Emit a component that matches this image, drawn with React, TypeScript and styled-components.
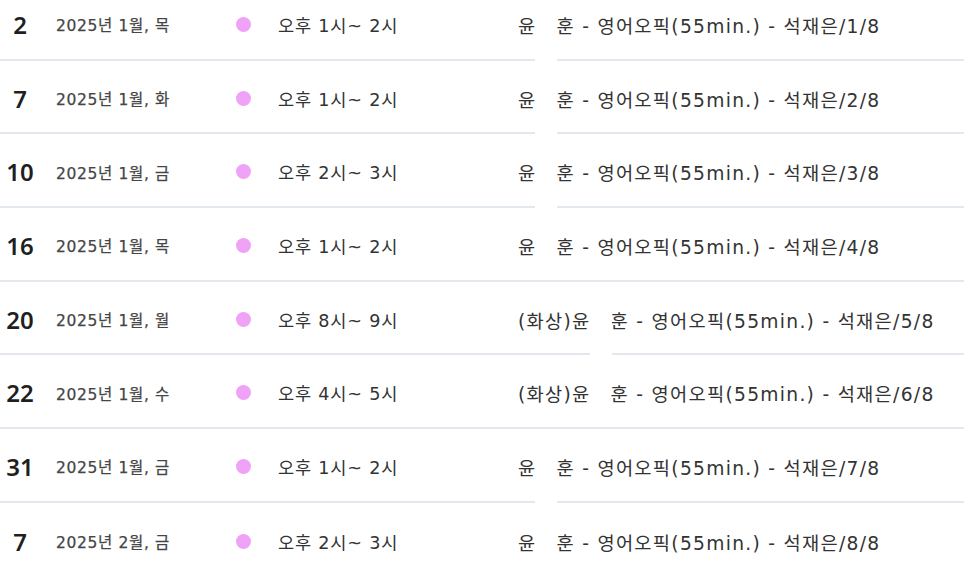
import React from "react";
import styled, { createGlobalStyle } from "styled-components";

const Global = createGlobalStyle`
  html, body { margin: 0; padding: 0; background: #ffffff; }
  body { font-family: "DejaVu Sans", "Noto Sans CJK KR", sans-serif; overflow: hidden; }
`;

const List = styled.div`
  margin-top: -13px;
  width: 964px;
`;

const Row = styled.div`
  box-sizing: border-box;
  height: 73.7px;
  padding-top: 3px;
  display: grid;
  grid-template-columns: 56px 180px 42px 240px 1fr;
  align-items: center;
  border-bottom: 2px solid #e3e7ee;
  &:last-child { border-bottom: none; }
`;

const Day = styled.div`
  width: 40px;
  text-align: center;
  font-family: "Noto Sans", "Noto Sans CJK KR", sans-serif;
  font-size: 24px;
  font-weight: 600;
  color: #1f1f1f;
`;

const DateText = styled.div`
  font-size: 15.5px;
  letter-spacing: 0.65px;
  color: #454545;
  -webkit-text-stroke: 0.25px #454545;
`;

const Dot = styled.span`
  display: block;
  width: 15px;
  height: 15px;
  border-radius: 50%;
  background: #f0a2f6;
`;

const Time = styled.div`
  font-size: 17.6px;
  letter-spacing: 0.8px;
  color: #333333;
`;

const Title = styled.div`
  font-size: 18.7px;
  letter-spacing: 1.28px;
  color: #333333;
  white-space: nowrap;
`;

const Blank = styled.span<{ $covers: boolean }>`
  display: inline-block;
  position: relative;
  width: 20px;
  height: 1em;
  vertical-align: middle;
  &::after {
    content: "";
    position: absolute;
    left: -1px;
    top: 0;
    width: 22px;
    height: ${(p) => (p.$covers ? "48px" : "0")};
    background: #ffffff;
  }
`;

type Item = {
  day: string;
  date: string;
  time: string;
  prefix: string;
  n: number;
  covers: boolean;
};

const items: Item[] = [
  { day: "2", date: "2025년 1월, 목", time: "오후 1시~ 2시", prefix: "", n: 1, covers: true },
  { day: "7", date: "2025년 1월, 화", time: "오후 1시~ 2시", prefix: "", n: 2, covers: true },
  { day: "10", date: "2025년 1월, 금", time: "오후 2시~ 3시", prefix: "", n: 3, covers: true },
  { day: "16", date: "2025년 1월, 목", time: "오후 1시~ 2시", prefix: "", n: 4, covers: false },
  { day: "20", date: "2025년 1월, 월", time: "오후 8시~ 9시", prefix: "(화상)", n: 5, covers: true },
  { day: "22", date: "2025년 1월, 수", time: "오후 4시~ 5시", prefix: "(화상)", n: 6, covers: false },
  { day: "31", date: "2025년 1월, 금", time: "오후 1시~ 2시", prefix: "", n: 7, covers: true },
  { day: "7", date: "2025년 2월, 금", time: "오후 2시~ 3시", prefix: "", n: 8, covers: false },
];

export default function App() {
  return (
    <>
      <Global />
      <List>
        {items.map((it, i) => (
          <Row key={i}>
            <Day>{it.day}</Day>
            <DateText>{it.date}</DateText>
            <Dot />
            <Time>{it.time}</Time>
            <Title>
              {it.prefix}윤<Blank $covers={it.covers} />훈 - 영어오픽(55min.) - 석재은/{it.n}/8
            </Title>
          </Row>
        ))}
      </List>
    </>
  );
}
